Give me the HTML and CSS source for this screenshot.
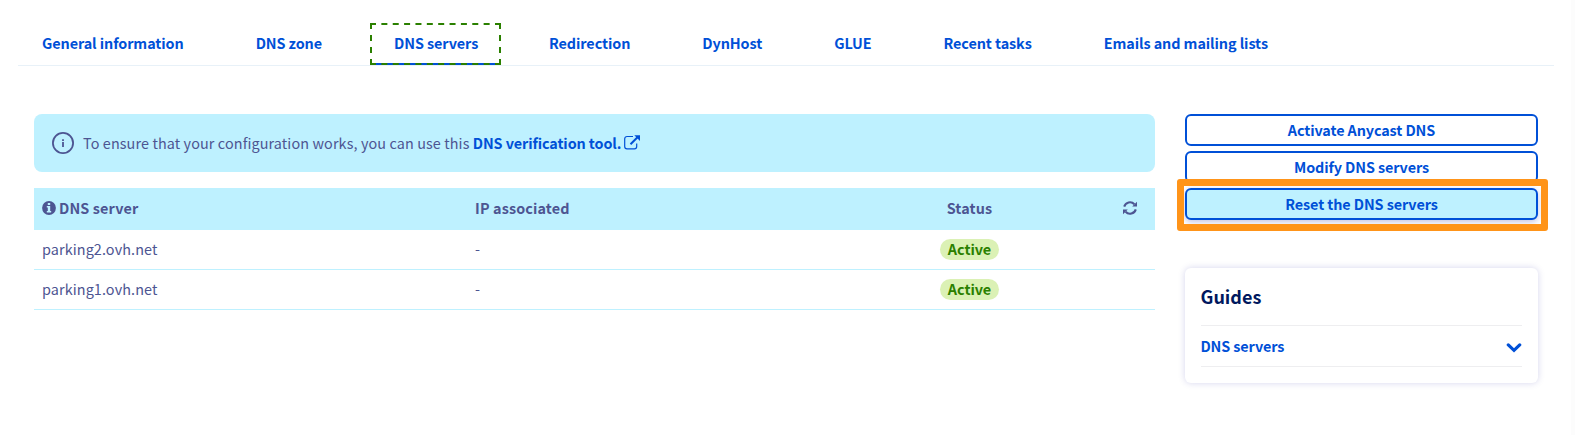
FILE: index.html
```html
<!DOCTYPE html>
<html lang="en">
<head>
<meta charset="utf-8">
<title>DNS servers</title>
<link rel="stylesheet" href="styles.css">
</head>
<body>
<nav class="tabs">
  <a class="tab">General information</a>
  <a class="tab">DNS zone</a>
  <a class="tab tab-active">DNS servers<svg class="focus-ring" width="131" height="42" viewBox="0 0 131 42"><path class="ring-x" d="M0 1H131M0 41H131"/><path class="ring-y" d="M1 0V42M130 0V42"/></svg></a>
  <a class="tab">Redirection</a>
  <a class="tab">DynHost</a>
  <a class="tab">GLUE</a>
  <a class="tab">Recent tasks</a>
  <a class="tab">Emails and mailing lists</a>
</nav>
<div class="content">
  <main class="main">
    <div class="banner">
      <svg class="banner-icon" width="22" height="22" viewBox="0 0 22 22"><circle cx="11" cy="11" r="10.1" fill="none" stroke="currentColor" stroke-width="1.8"/><path d="M10.1 7.2h1.8v1.7h-1.8zM10.1 10h1.8v5h-1.8z" fill="currentColor"/></svg>
      <p class="banner-text"><span class="banner-copy">To ensure that your configuration works, you can use this</span> <a class="banner-link">DNS verification tool.</a></p>
      <svg class="external" width="16" height="15" viewBox="0 0 16 15" fill="none" stroke="currentColor"><path d="M9 1.500H3A2.300 2.300 0 0 0 .7 3.800V11.500A2.300 2.300 0 0 0 3 13.800H10.400A2.300 2.300 0 0 0 12.700 11.500V8.500" stroke-width="1.200"/><path d="M6.500 9.200 13.500 2.200" stroke-width="2"/><path d="M10.300.3H16V6z" fill="currentColor" stroke="none"/></svg>
    </div>
    <table class="table">
      <thead>
        <tr>
          <th class="col-server"><span class="head-label"><svg width="14" height="14" viewBox="0 0 14 14"><circle cx="7" cy="7" r="6.900" fill="currentColor"/><path d="M5.800 2.100h2.400v1.900H5.800zM4.800 5h3.400v5h1v1.600H4.800V10h1V6.600h-1z" fill="#bef1ff"/></svg>DNS server</span></th>
          <th class="col-ip">IP associated</th>
          <th class="col-status">Status</th>
          <th class="col-refresh"><svg width="14" height="14" viewBox="0 0 14 14"><path d="M1.200 5.600A6 6 0 0 1 11.400 3.200M12.800 8.400A6 6 0 0 1 2.600 10.800" fill="none" stroke="currentColor" stroke-width="2.100"/><path d="M14 .8V5.600H9.200zM0 13.200V8.400H4.800z" fill="currentColor"/></svg></th>
        </tr>
      </thead>
      <tbody>
        <tr><td>parking2.ovh.net</td><td>-</td><td class="col-status"><span class="badge">Active</span></td><td></td></tr>
        <tr><td>parking1.ovh.net</td><td>-</td><td class="col-status"><span class="badge">Active</span></td><td></td></tr>
      </tbody>
    </table>
  </main>
  <aside class="side">
    <div class="actions">
      <button class="button">Activate Anycast DNS</button>
      <button class="button">Modify DNS servers</button>
      <div class="highlighted"><button class="button button-hover">Reset the DNS servers</button></div>
    </div>
    <section class="guides">
      <h2 class="guides-title">Guides</h2>
      <div class="guides-row"><span>DNS servers</span><svg class="chevron" width="16" height="10" viewBox="0 0 16 10"><path d="M2.300 1.900 8 7.300 13.700 1.900" fill="none" stroke="currentColor" stroke-width="3.200" stroke-linecap="round"/></svg></div>
    </section>
  </aside>
</div>
</body>
</html>
```
FILE: styles.css
```css
* { box-sizing: border-box; }
body {
  margin: 0;
  height: 435px;
  padding: 23px 21px 0 18px;
  overflow: hidden;
  background: linear-gradient(to left, #fcfcfc 4px, #fff 4px);
  color: #4d5592;
  font: 14.4px/20px "Noto Sans CJK SC", sans-serif;
}
.tabs {
  display: flex;
  gap: 24px;
  height: 43px;
  border-bottom: 1px solid #e8f1f8;
}
.tab {
  height: 42px;
  padding: 0 24px;
  line-height: 40px;
  font-weight: 600;
  letter-spacing: -0.085px;
  color: #0050d7;
  white-space: nowrap;
}
.tab-active {
  position: relative;
  width: 131px;
  border-bottom: 2px solid #0050d7;
}
.focus-ring {
  position: absolute;
  left: 0;
  top: 0;
  fill: none;
  stroke: #2b8000;
  stroke-width: 2px;
}
.ring-x { stroke-dasharray: 6 5.364; }
.ring-y { stroke-dasharray: 6 6; }
.content {
  display: flex;
  gap: 30px;
  padding: 48px 0 0 16px;
}
.main { width: 1121px; }
.banner {
  display: flex;
  align-items: center;
  height: 58px;
  padding: 0 18px;
  border-radius: 8px;
  background: #bef1ff;
}
.banner-icon { margin-right: 9px; }
.banner-text { margin: 0; white-space: nowrap; }
.banner-copy { letter-spacing: 0.105px; }
.banner-link { font-weight: 600; letter-spacing: -0.1px; color: #0050d7; }
.external { margin-left: 3px; margin-bottom: 1px; color: #0050d7; }
.table {
  width: 100%;
  margin-top: 16px;
  border-collapse: separate;
  border-spacing: 0;
  table-layout: fixed;
}
.table th {
  height: 42px;
  padding: 0 8px 2px;
  background: #bef1ff;
  font-weight: 700;
  letter-spacing: 0.13px;
  text-align: left;
}
.table td {
  height: 40px;
  padding: 0 8px 2px;
  border-bottom: 1px solid #bef1ff;
  letter-spacing: 0.1px;
}
.col-server { width: 433px; }
.col-ip { width: 406px; }
.table .col-status { width: 193px; text-align: center; }
.table .col-refresh { padding-right: 18px; text-align: right; }
.col-refresh svg { display: block; margin-left: auto; }
.head-label { display: flex; align-items: center; gap: 3px; }
.badge {
  display: inline-block;
  height: 21px;
  padding: 0 8px;
  border-radius: 11px;
  background: #dbf1b5;
  color: #2b8000;
  font-weight: 600;
  letter-spacing: -0.05px;
  line-height: 20px;
  vertical-align: middle;
}
.side { width: 353px; }
.actions { display: flex; flex-direction: column; gap: 5px; }
.button {
  display: block;
  width: 100%;
  height: 32px;
  padding: 0;
  border: 2px solid #0050d7;
  border-radius: 6px;
  background: #fff;
  color: #0050d7;
  font: 600 14.4px/28px "Noto Sans CJK SC", sans-serif;
  letter-spacing: -0.1px;
}
.button-hover { background: #bef1ff; box-shadow: 0 2px 6px rgba(0, 0, 140, .24); }
.highlighted {
  position: relative;
  margin: -9px -10px 0 -8px;
  padding: 2px 3px 4px 1px;
  border: 7px solid #ff9419;
  border-radius: 3px;
  background: #fff;
  overflow: hidden;
}
.guides {
  height: 115px;
  margin-top: 37px;
  padding: 16px 16px 0;
  border-radius: 6px;
  background: #fff;
  box-shadow: 0 0 7px rgba(0, 0, 150, .17);
}
.guides-title {
  margin: 0 0 0 -0.5px;
  height: 41px;
  font-size: 18px;
  line-height: 25px;
  font-weight: 700;
  color: #00185e;
}
.guides-row {
  display: flex;
  align-items: center;
  justify-content: space-between;
  height: 42px;
  border: solid #eeeef0;
  border-width: 1px 0;
  font-weight: 600;
  letter-spacing: -0.11px;
  text-indent: -0.6px;
  color: #0050d7;
}
.chevron { margin-top: 4px; }
```
